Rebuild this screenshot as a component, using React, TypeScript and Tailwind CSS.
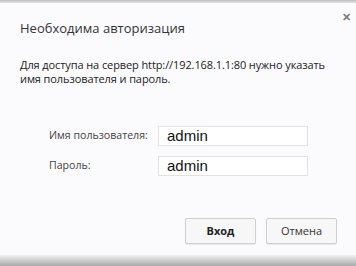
export default function App() {
  return (
    <div className="w-[356px] h-[266px] flex flex-col bg-[#fbfbfd] font-['Open_Sans',sans-serif] overflow-hidden">
      <div className="h-[3px] bg-gradient-to-b from-[#bdbdbd] to-[#e6e6e6]" />

      <div className="relative flex-1 flex flex-col px-5">
        <button className="absolute right-[5px] top-[8px] text-[11px] font-bold leading-none text-[#7a7a7a]">
          ✕
        </button>

        <h1 className="mt-[15px] text-[13px] leading-5 text-[#333] whitespace-nowrap">
          Необходима авторизация
        </h1>

        <p className="mt-[20px] text-[11px] leading-[14px] tracking-[-0.1px] text-[#222] whitespace-nowrap">
          Для доступа на сервер http://192.168.1.1:80 нужно указать
          <br />
          имя пользователя и пароль.
        </p>

        <div className="mt-[40px] ml-[29px] flex flex-col gap-[10px]">
          <div className="flex items-center">
            <label className="w-[109px] text-[10.6px] text-[#444]">Имя пользователя:</label>
            <div className="w-[150px] h-[20px] border border-[#e2e2e2] bg-white pl-2 flex items-center font-['Liberation_Sans',Arial,sans-serif] text-[15px] text-[#111]">
              admin
            </div>
          </div>
          <div className="flex items-center">
            <label className="w-[109px] text-[10.6px] text-[#444]">Пароль:</label>
            <div className="w-[150px] h-[20px] border border-[#e2e2e2] bg-white pl-2 flex items-center font-['Liberation_Sans',Arial,sans-serif] text-[15px] text-[#111]">
              admin
            </div>
          </div>
        </div>

        <div className="mt-[42px] flex justify-end gap-[10px] mr-[-1px]">
          <button className="w-[71px] h-[26px] rounded-[2px] border border-[#cfcfcf] bg-[#f7f7f7] shadow-[0_1px_1px_rgba(0,0,0,0.08)] text-[11px] font-bold text-[#222]">
            Вход
          </button>
          <button className="w-[71px] h-[26px] rounded-[2px] border border-[#cfcfcf] bg-[#f7f7f7] shadow-[0_1px_1px_rgba(0,0,0,0.08)] text-[11px] text-[#333]">
            Отмена
          </button>
        </div>
      </div>

      <div className="h-[11px] bg-gradient-to-b from-[#f2f2f2] to-[#a9a9a9]" />
    </div>
  );
}
